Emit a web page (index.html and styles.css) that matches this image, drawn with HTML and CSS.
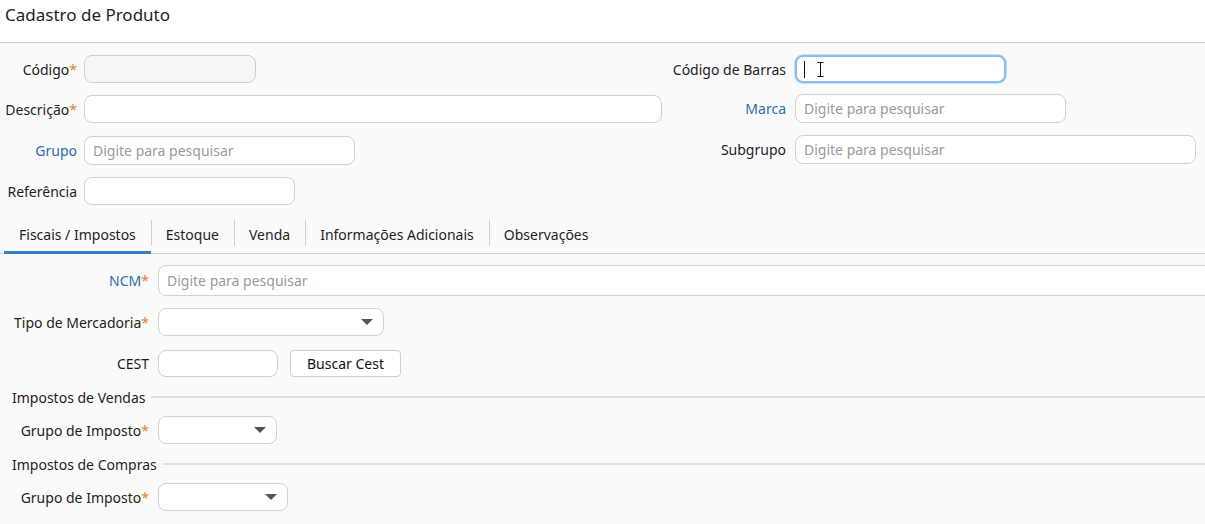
FILE: index.html
```html
<!DOCTYPE html>
<html lang="pt">
<head>
<meta charset="utf-8">
<title>Cadastro de Produto</title>
<link rel="stylesheet" href="styles.css">
</head>
<body>
<div class="page">
  <header class="header"><h1 class="title">Cadastro de Produto</h1></header>
  <main class="content">
    <section class="top-form">
      <div class="col col-left">
        <div class="row"><label class="lbl lbl-left">Código<span class="req">*</span></label><div class="field w-codigo disabled"></div></div>
        <div class="row"><label class="lbl lbl-left">Descrição<span class="req">*</span></label><div class="field w-desc"></div></div>
        <div class="row"><label class="lbl lbl-left link">Grupo</label><div class="field w-grupo"><span class="ph">Digite para pesquisar</span></div></div>
        <div class="row"><label class="lbl lbl-left">Referência</label><div class="field w-ref"></div></div>
      </div>
      <div class="col col-right">
        <div class="row"><label class="lbl lbl-right">Código de Barras</label><div class="field w-barras focus"><span class="caret"></span><svg class="ibeam" width="7" height="15" viewBox="0 0 7 15"><path d="M0.5 0.5h6M3.5 0.5v14M0.5 14.5h6" stroke="#111" stroke-width="1" fill="none"/></svg></div></div>
        <div class="row r-marca"><label class="lbl lbl-right link">Marca</label><div class="field w-marca"><span class="ph">Digite para pesquisar</span></div></div>
        <div class="row r-sub"><label class="lbl lbl-right">Subgrupo</label><div class="field w-sub"><span class="ph">Digite para pesquisar</span></div></div>
      </div>
    </section>

    <nav class="tabs">
      <div class="tab active">Fiscais / Impostos</div>
      <div class="tab">Estoque</div>
      <div class="tab">Venda</div>
      <div class="tab">Informações Adicionais</div>
      <div class="tab">Observações</div>
    </nav>

    <section class="tab-body">
      <div class="row2 r-ncm"><label class="lbl2 link">NCM<span class="req">*</span></label><div class="field w-ncm"><span class="ph">Digite para pesquisar</span></div></div>
      <div class="row2"><label class="lbl2">Tipo de Mercadoria<span class="req">*</span></label><div class="field select w-tipo"><span class="arrow"></span></div></div>
      <div class="row2"><label class="lbl2">CEST</label><div class="field w-cest"></div><button class="btn">Buscar Cest</button></div>
      <div class="group-title"><span>Impostos de Vendas</span><span class="rule"></span></div>
      <div class="row2"><label class="lbl2 lbl-sub">Grupo de Imposto<span class="req">*</span></label><div class="field select w-gi1"><span class="arrow"></span></div></div>
      <div class="group-title"><span>Impostos de Compras</span><span class="rule"></span></div>
      <div class="row2"><label class="lbl2 lbl-sub">Grupo de Imposto<span class="req">*</span></label><div class="field select w-gi2"><span class="arrow"></span></div></div>
    </section>
  </main>
</div>
</body>
</html>
```

FILE: styles.css
```css
html, body {
  margin: 0;
  padding: 0;
}
body {
  font-family: "Noto Sans", "Open Sans", sans-serif;
  font-size: 14px;
  color: #1e1e1e;
  background: #fafafa;
  overflow: hidden;
  width: 1205px;
  height: 524px;
}
.page {
  width: 1205px;
  overflow: hidden;
}
.header {
  background: #fff;
  border-bottom: 1px solid #cbcbcb;
  box-sizing: border-box;
  height: 43px;
}
.title {
  margin: 0;
  padding: 4px 0 0 5px;
  font-size: 17px;
  font-weight: normal;
  color: #1e1e1e;
  line-height: 22px;
}
.content {
  background: #fafafa;
}
.top-form {
  display: flex;
  padding-top: 12px;
}
.col {
  display: flex;
  flex-direction: column;
  gap: 12px;
}
.col-left { width: 670px; }
.col-left .row:nth-child(3) { margin-top: 1px; }
.col-left .row:nth-child(4) { margin-top: 1px; }
.col-right { flex: 1; }
.col-right .r-marca { margin-top: -1px; }
.col-right .r-sub { margin-top: 1px; }
.row {
  display: flex;
  align-items: center;
  height: 28px;
}
.lbl {
  text-align: right;
  white-space: nowrap;
  flex: none;
}
.lbl-left { width: 77px; margin-right: 7px; }
.lbl-right { width: 116px; margin-right: 9px; }
.link { color: #2a6db3; }
.req { color: #e8802e; }
.field {
  box-sizing: border-box;
  height: 28px;
  background: #fff;
  border: 1px solid #d0d0d0;
  border-radius: 8px;
  display: flex;
  align-items: center;
  padding: 0 8px;
  position: relative;
  flex: none;
}
.field.disabled { background: #f6f6f6; }
.field.focus {
  border: 2px solid #8dbcf0;
  box-shadow: 0 0 0 1px #c6def8;
  padding-left: 7px;
}
.ph { color: #9a9a9a; white-space: nowrap; }
.w-codigo { width: 172px; }
.w-desc { width: 578px; }
.w-grupo { width: 271px; height: 29px; }
.w-ref { width: 211px; }
.w-barras { width: 211px; }
.w-marca { width: 271px; height: 29px; }
.w-sub { width: 401px; height: 29px; }
.caret {
  display: block;
  width: 1px;
  height: 17px;
  background: #111;
}
.ibeam {
  position: absolute;
  left: 20px;
  top: 5px;
}
.tabs {
  display: flex;
  margin: 13px 0 0 0;
  padding-left: 4px;
  border-bottom: 1px solid #cfcfcf;
  height: 36px;
  box-sizing: border-box;
}
.tab {
  position: relative;
  padding: 0 15px;
  line-height: 34px;
  white-space: nowrap;
  color: #1e1e1e;
}
.tab + .tab::before {
  content: "";
  position: absolute;
  left: 0;
  top: 2px;
  width: 1px;
  height: 26px;
  background: #d0d0d0;
}
.tab.active::after {
  content: "";
  position: absolute;
  left: 0;
  right: 0;
  bottom: -1px;
  height: 3px;
  background: #3b7dc4;
}
.tab-body {
  padding-top: 11px;
  display: flex;
  flex-direction: column;
}
.row2 {
  display: flex;
  align-items: center;
  height: 28px;
  margin-bottom: 13px;
}
.r-ncm { height: 31px; margin-bottom: 12px; }
.lbl2 {
  width: 149px;
  margin-right: 9px;
  text-align: right;
  white-space: nowrap;
  flex: none;
}
.w-ncm { width: 1080px; height: 31px; }
.w-tipo { width: 226px; }
.w-cest { width: 120px; height: 27px; }
.w-gi1 { width: 119px; }
.w-gi2 { width: 130px; }
.select { justify-content: flex-end; padding-right: 10px; }
.arrow {
  width: 0;
  height: 0;
  border-left: 6px solid transparent;
  border-right: 6px solid transparent;
  border-top: 6px solid #555;
}
.btn {
  margin-left: 12px;
  box-sizing: border-box;
  width: 111px;
  height: 27px;
  background: #fff;
  border: 1px solid #cfcfcf;
  border-radius: 4px;
  font-family: inherit;
  font-size: 14px;
  color: #111;
  padding: 0;
}
.group-title {
  display: flex;
  align-items: center;
  padding-left: 12px;
  height: 20px;
  margin-top: -3px;
  margin-bottom: 9px;
}
.group-title .rule {
  flex: 1;
  height: 2px;
  background: #e0e0e0;
  margin-left: 6px;
}
```
